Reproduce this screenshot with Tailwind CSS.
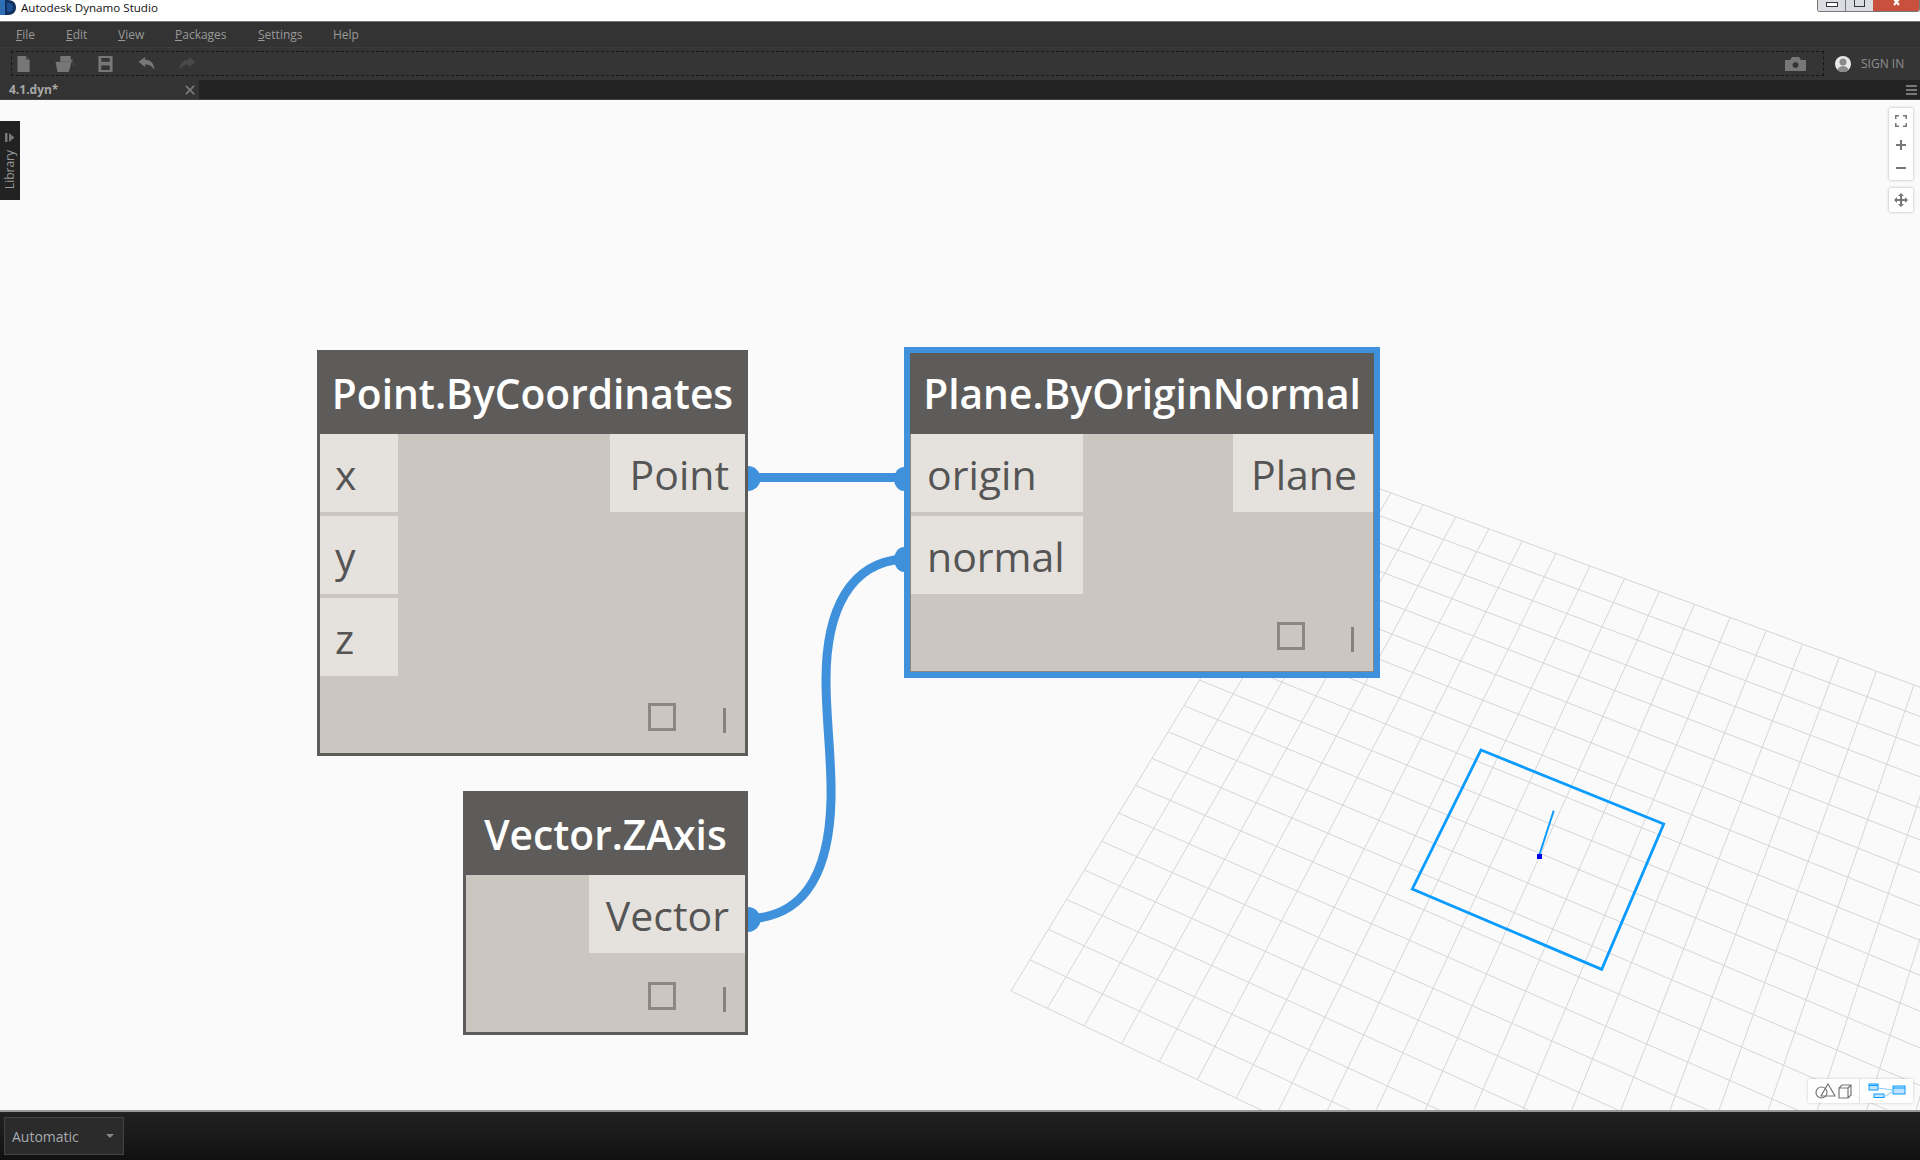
<!DOCTYPE html>
<html lang="en">
<head>
    <meta charset="UTF-8">
    <title>Autodesk Dynamo Studio</title>
    <script src="https://cdn.jsdelivr.net/npm/@tailwindcss/browser@4"></script>
</head>
<body class="bg-[#fafafa] overflow-hidden font-['Open_Sans',sans-serif]">
<div class="w-[1920px] h-[1160px] flex flex-col overflow-hidden">

    <!-- Window title bar -->
    <div class="h-[21px] bg-white flex items-start relative shrink-0">
        <svg class="w-[17px] h-[16px] shrink-0" viewBox="0 0 17 16">
            <path d="M0 0h6v15H0z" fill="#2f6fb5"/>
            <path d="M5 0h3c5 0 8 3 8 7.500S13 15 8 15H5z" fill="#12305f"/>
            <path d="M7 3h1c3 0 5 2 5 4.500S11 12 8 12H7z" fill="#1d4f94"/>
        </svg>
        <span class="ml-[4px] text-[11.6px] leading-[15px] text-[#111]">Autodesk Dynamo Studio</span>
        <div class="absolute right-0 top-0 h-[12px] flex rounded-b-[3px] overflow-hidden border border-t-0 border-[#777]">
            <div class="w-[28px] bg-[#dcdde2] border-r border-[#777] flex justify-center"><div class="w-[12px] h-[5px] mt-[2px] border border-[#334] bg-white"></div></div>
            <div class="w-[27px] bg-[#dcdde2] flex justify-center"><div class="w-[11px] h-[7px] border border-t-0 border-[#334]"></div></div>
            <div class="w-[46px] bg-[#c9503c] flex justify-center">
                <svg class="w-[11px] h-[6px]" viewBox="0 0 11 6"><path d="M2 -2L8 5M9 -2L3 5" stroke="#fff" stroke-width="2"/></svg>
            </div>
        </div>
    </div>

    <!-- Menu -->
    <div class="h-[27px] shrink-0 bg-[#333333] border-t border-t-[#777] border-b border-b-[#3c3c3c] flex items-center text-[12px] text-[#999] relative">
        <span class="absolute left-[16px]"><u>F</u>ile</span>
        <span class="absolute left-[66px]"><u>E</u>dit</span>
        <span class="absolute left-[118px]"><u>V</u>iew</span>
        <span class="absolute left-[175px]"><u>P</u>ackages</span>
        <span class="absolute left-[258px]"><u>S</u>ettings</span>
        <span class="absolute left-[333px]">Help</span>
    </div>

    <!-- Toolbar -->
    <div class="h-[32px] shrink-0 bg-[#353535] flex items-center">
        <div class="ml-[11px] self-start mt-[3px] w-[1813px] h-[25px] border border-dashed border-[#161616] flex items-center relative">
            <svg class="absolute left-[5px] top-[4px] w-[14px] h-[16px]" viewBox="0 0 14 17"><path d="M0 0h9l4 4v13H0z" fill="#777"/><path d="M9 0l4 4H9z" fill="#4a4a4a"/></svg>
            <svg class="absolute left-[43px] top-[4px] w-[20px] h-[16px]" viewBox="0 0 20 17"><path d="M5 2V0h11v4h2v2H5z" fill="#777"/><path d="M0 6h17l-3 11H2z" fill="#777"/><path d="M18 8h2l-1 3z" fill="#555"/></svg>
            <svg class="absolute left-[86px] top-[4px] w-[15px] h-[16px]" viewBox="0 0 15 17"><path fill-rule="evenodd" d="M0 0h15v17H0zM3 2v4h9V2zM3 10v5h9v-5z" fill="#777"/></svg>
            <svg class="absolute left-[126px] top-[5px] w-[18px] h-[14px]" viewBox="0 0 18 15"><path d="M0 5L7 0v3c6 0 10 4 10 11-2-4-5-6-10-6v3z" fill="#777"/></svg>
            <svg class="absolute left-[166px] top-[5px] w-[18px] h-[14px]" viewBox="0 0 18 15"><path d="M18 5L11 0v3C5 3 1 7 1 14c2-4 5-6 10-6v3z" fill="#4a4a4a"/></svg>
            <svg class="absolute right-[17px] top-[5px] w-[21px] h-[14px]" viewBox="0 0 21 14"><path fill-rule="evenodd" d="M0 3h5l2-3h7l2 3h5v11H0zM10.500 5a3 3 0 1 0 .01 0z" fill="#777"/></svg>
        </div>
        <svg class="ml-[11px] w-[16px] h-[16px]" viewBox="0 0 16 16"><circle cx="8" cy="8" r="8" fill="#e8e8e8"/><circle cx="8" cy="6" r="3.500" fill="#8a8a8a"/><path d="M2.500 14c1-3 3-4 5.500-4s4.500 1 5.500 4a8 8 0 0 1-11 0z" fill="#8a8a8a"/></svg>
        <span class="ml-[10px] text-[12px] text-[#8f8f8f]">SIGN IN</span>
    </div>

    <!-- Tabs -->
    <div class="h-[20px] shrink-0 bg-[#232323] flex items-stretch relative border-b border-[#444]">
        <div class="w-[199px] bg-[#333333] flex items-center justify-between pl-[9px] pr-[3px]">
            <span class="text-[12px] font-bold text-[#a8a8a8]">4.1.dyn*</span>
            <svg class="w-[10px] h-[10px] mr-[1px]" viewBox="0 0 11 11"><path d="M1 1l9 9M10 1l-9 9" stroke="#777" stroke-width="2"/></svg>
        </div>
        <div class="absolute right-[3px] top-[5px] w-[11px] flex flex-col gap-[2px]">
            <div class="h-[2px] bg-[#777]"></div><div class="h-[2px] bg-[#777]"></div><div class="h-[2px] bg-[#777]"></div>
        </div>
    </div>

    <!-- Canvas: everything below is placed relative to the page so offsets match the graph -->
    <div class="flex-1 relative bg-[#fafafa]">
        <svg id="scene" class="absolute left-0 top-[-100px] w-[1920px] h-[1160px] pointer-events-none" viewBox="0 0 1920 1160">
            <g id="grid" stroke="#d6d6d6" stroke-width="1" fill="none"></g>
            <path d="M1481 750L1663.700 824L1601.700 969.300L1412.300 889Z" fill="none" stroke="#0a9bff" stroke-width="2.800"/>
            <path d="M1553.700 810.700L1539 856" stroke="#0a9bff" stroke-width="2"/>
            <rect x="1537" y="854" width="5" height="5" fill="#0000e6"/>
            <g fill="none" stroke="#4091dc" stroke-width="9">
                <path d="M748 477.500H904"/>
                <path d="M748 919C800 917 829 880 831 800C832 760 826 720 826 680C826 610 850 562 904 559"/>
            </g>
            <g fill="#4091dc">
                <path d="M748 466a12.500 12.500 0 0 1 0 25z"/>
                <path d="M748 907a12.500 12.500 0 0 1 0 25z"/>
                <path d="M904 467a10 12 0 0 0 0 24z"/>
                <path d="M904 547a10 12.500 0 0 0 0 25z"/>
            </g>
        </svg>

        <!-- Library tab -->
        <div class="absolute left-0 top-[21px] w-[20px] h-[79px] bg-[#222] flex flex-col items-center">
            <svg class="mt-[12px] w-[10px] h-[9px]" viewBox="0 0 10 9"><path d="M0 0h2.500v9H0zM4 0l5.500 4.500L4 9z" fill="#777"/></svg>
            <span class="mt-[8px] text-[12px] leading-[16px] text-[#999] [writing-mode:vertical-rl] rotate-180">Library</span>
        </div>

        <!-- Nav controls -->
        <div class="absolute left-[1889px] top-[8px] w-[24px] h-[72px] bg-white rounded-[2px] shadow-[0_0_3px_rgba(0,0,0,0.3)] flex flex-col items-center">
            <svg class="mt-[7px] w-[12px] h-[12px]" viewBox="0 0 12 12"><path d="M0 4V0h4v1.500H1.500V4zM8 0h4v4h-1.500V1.500H8zM0 8h1.500v2.500H4V12H0zM12 8v4H8v-1.500h2.500V8z" fill="#777"/></svg>
            <svg class="mt-[13px] w-[10px] h-[10px]" viewBox="0 0 10 10"><path d="M4 0h2v4h4v2H6v4H4V6H0V4h4z" fill="#777"/></svg>
            <div class="mt-[17px] w-[10px] h-[2px] bg-[#777]"></div>
        </div>
        <div class="absolute left-[1889px] top-[88px] w-[24px] h-[24px] bg-white rounded-[2px] shadow-[0_0_3px_rgba(0,0,0,0.3)] flex items-center justify-center">
            <svg class="w-[14px] h-[14px]" viewBox="0 0 14 14"><path d="M7 0l3 3H8v3h3V4l3 3-3 3V8H8v3h2l-3 3-3-3h2V8H3v2L0 7l3-3v2h3V3H4z" fill="#777"/></svg>
        </div>

        <!-- Point.ByCoordinates -->
        <div class="absolute left-[317px] top-[250px] w-[431px] h-[406px] border-[3px] border-[#5e5c5a] bg-[#cbc6bf] flex flex-col text-[#555]">
            <div class="h-[81px] bg-[#5e5c5a] text-white text-[40.700px] font-semibold leading-[81px] text-center whitespace-nowrap">Point.ByCoordinates</div>
            <div class="flex justify-between items-start">
                <div class="flex flex-col gap-[4px] w-[78px] text-[41px] leading-[81px]">
                    <div class="h-[78px] bg-[#e5e2dd] pl-[15px]">x</div>
                    <div class="h-[78px] bg-[#e5e2dd] pl-[15px]">y</div>
                    <div class="h-[78px] bg-[#e5e2dd] pl-[15px]">z</div>
                </div>
                <div class="w-[135px] h-[78px] bg-[#e5e2dd] text-[41px] leading-[81px] text-right pr-[16px]">Point</div>
            </div>
            <div class="absolute left-[328px] top-[350px] w-[28px] h-[28px] border-[3px] border-[#8b8882]"></div>
            <div class="absolute left-[403px] top-[355px] w-[3px] h-[25px] bg-[#86817a]"></div>
        </div>

        <!-- Plane.ByOriginNormal -->
        <div class="absolute left-[904px] top-[247px] w-[476px] h-[331px] border-[6px] border-[#4091dc] bg-[#cbc6bf] flex flex-col text-[#555]">
            <div class="h-[81px] bg-[#5e5c5a] text-white text-[40.700px] font-semibold leading-[81px] text-center whitespace-nowrap">Plane.ByOriginNormal</div>
            <div class="flex justify-between items-start border-x border-[#8b8882] flex-1 border-b">
                <div class="flex flex-col gap-[4px] w-[172px] text-[41px] leading-[81px]">
                    <div class="h-[78px] bg-[#e5e2dd] pl-[16px]">origin</div>
                    <div class="h-[78px] bg-[#e5e2dd] pl-[16px]">normal</div>
                </div>
                <div class="w-[140px] h-[78px] bg-[#e5e2dd] text-[41px] leading-[81px] text-right pr-[16px]">Plane</div>
            </div>
            <div class="absolute left-[367px] top-[269px] w-[28px] h-[28px] border-[3px] border-[#8b8882]"></div>
            <div class="absolute left-[441px] top-[274px] w-[3px] h-[25px] bg-[#86817a]"></div>
        </div>

        <!-- Vector.ZAxis -->
        <div class="absolute left-[463px] top-[691px] w-[285px] h-[244px] border-[3px] border-[#5e5c5a] bg-[#cbc6bf] flex flex-col text-[#555]">
            <div class="h-[81px] bg-[#5e5c5a] text-white text-[40.700px] font-semibold leading-[81px] text-center whitespace-nowrap">Vector.ZAxis</div>
            <div class="flex justify-end">
                <div class="w-[156px] h-[78px] bg-[#e5e2dd] text-[41px] leading-[81px] text-right pr-[16px]">Vector</div>
            </div>
            <div class="absolute left-[182px] top-[188px] w-[28px] h-[28px] border-[3px] border-[#8b8882]"></div>
            <div class="absolute left-[257px] top-[193px] w-[3px] h-[25px] bg-[#86817a]"></div>
        </div>

        <!-- Geometry / graph toggle -->
        <div class="absolute left-[1808px] top-[979px] w-[105px] h-[24px] bg-white/80 rounded-[2px] shadow-[0_0_3px_rgba(0,0,0,0.2)] flex">
            <div class="w-[52px] border-r border-[#e2e2e2] flex items-center justify-center">
                <svg class="w-[37px] h-[16px]" viewBox="0 0 37 16" fill="none" stroke="#777" stroke-width="1.200">
                    <circle cx="6.500" cy="9.500" r="5.500"/>
                    <path d="M13 1L20 13H6z"/>
                    <path d="M24 5h9v10h-9zM24 5l3-3h9v10l-3 3M33 5l3-3"/>
                </svg>
            </div>
            <div class="flex-1 flex items-center justify-center">
                <svg class="w-[38px] h-[16px]" viewBox="0 0 38 16" fill="none" stroke="#0a9bff" stroke-width="1">
                    <path d="M10 5l14 2M16 14l8-5" stroke="#8cc8f5"/>
                    <rect x="1" y="1" width="9" height="6" fill="#bfe3fd"/>
                    <path d="M1 2.500h9"/>
                    <rect x="6" y="11" width="10" height="3.500" fill="#bfe3fd"/>
                    <rect x="25" y="3" width="12" height="8" fill="#bfe3fd"/>
                    <path d="M25 5h12"/>
                </svg>
            </div>
        </div>
    </div>

    <!-- Run bar -->
    <div class="h-[50px] shrink-0 border-t-[2px] border-[#999] bg-gradient-to-b from-[#222] to-[#111] flex items-start pl-[4px] pt-[5px] relative">
        <div class="w-[120px] h-[38px] bg-[#2b2b2b] border border-[#444] flex items-center justify-between pl-[7px] pr-[9px]">
            <span class="text-[14px] text-[#a6aab0]">Automatic</span>
            <div class="w-0 h-0 border-x-[4px] border-x-transparent border-t-[4px] border-t-[#888]"></div>
        </div>
    </div>
</div>

<script>
    // ground plane grid, 20 x 20 cells in perspective
    const A = [1011, 991], V1 = [2847, -2038], V2 = [-4855, -1801];
    const S = 0.00616, R = 0.0104, N = 20;
    function project(u, v) {
        const w = 1 - u * S + v * R;
        return [
            (A[0] - u * S * V2[0] + v * R * V1[0]) / w,
            (A[1] - u * S * V2[1] + v * R * V1[1]) / w
        ];
    }
    let d = '';
    for (let i = 0; i <= N; i++) {
        const a = project(i, 0), b = project(i, N), c = project(0, i), e = project(N, i);
        d += `M${a[0]} ${a[1]}L${b[0]} ${b[1]}M${c[0]} ${c[1]}L${e[0]} ${e[1]}`;
    }
    const path = document.createElementNS('http://www.w3.org/2000/svg', 'path');
    path.setAttribute('d', d);
    document.getElementById('grid').appendChild(path);
</script>
</body>
</html>
